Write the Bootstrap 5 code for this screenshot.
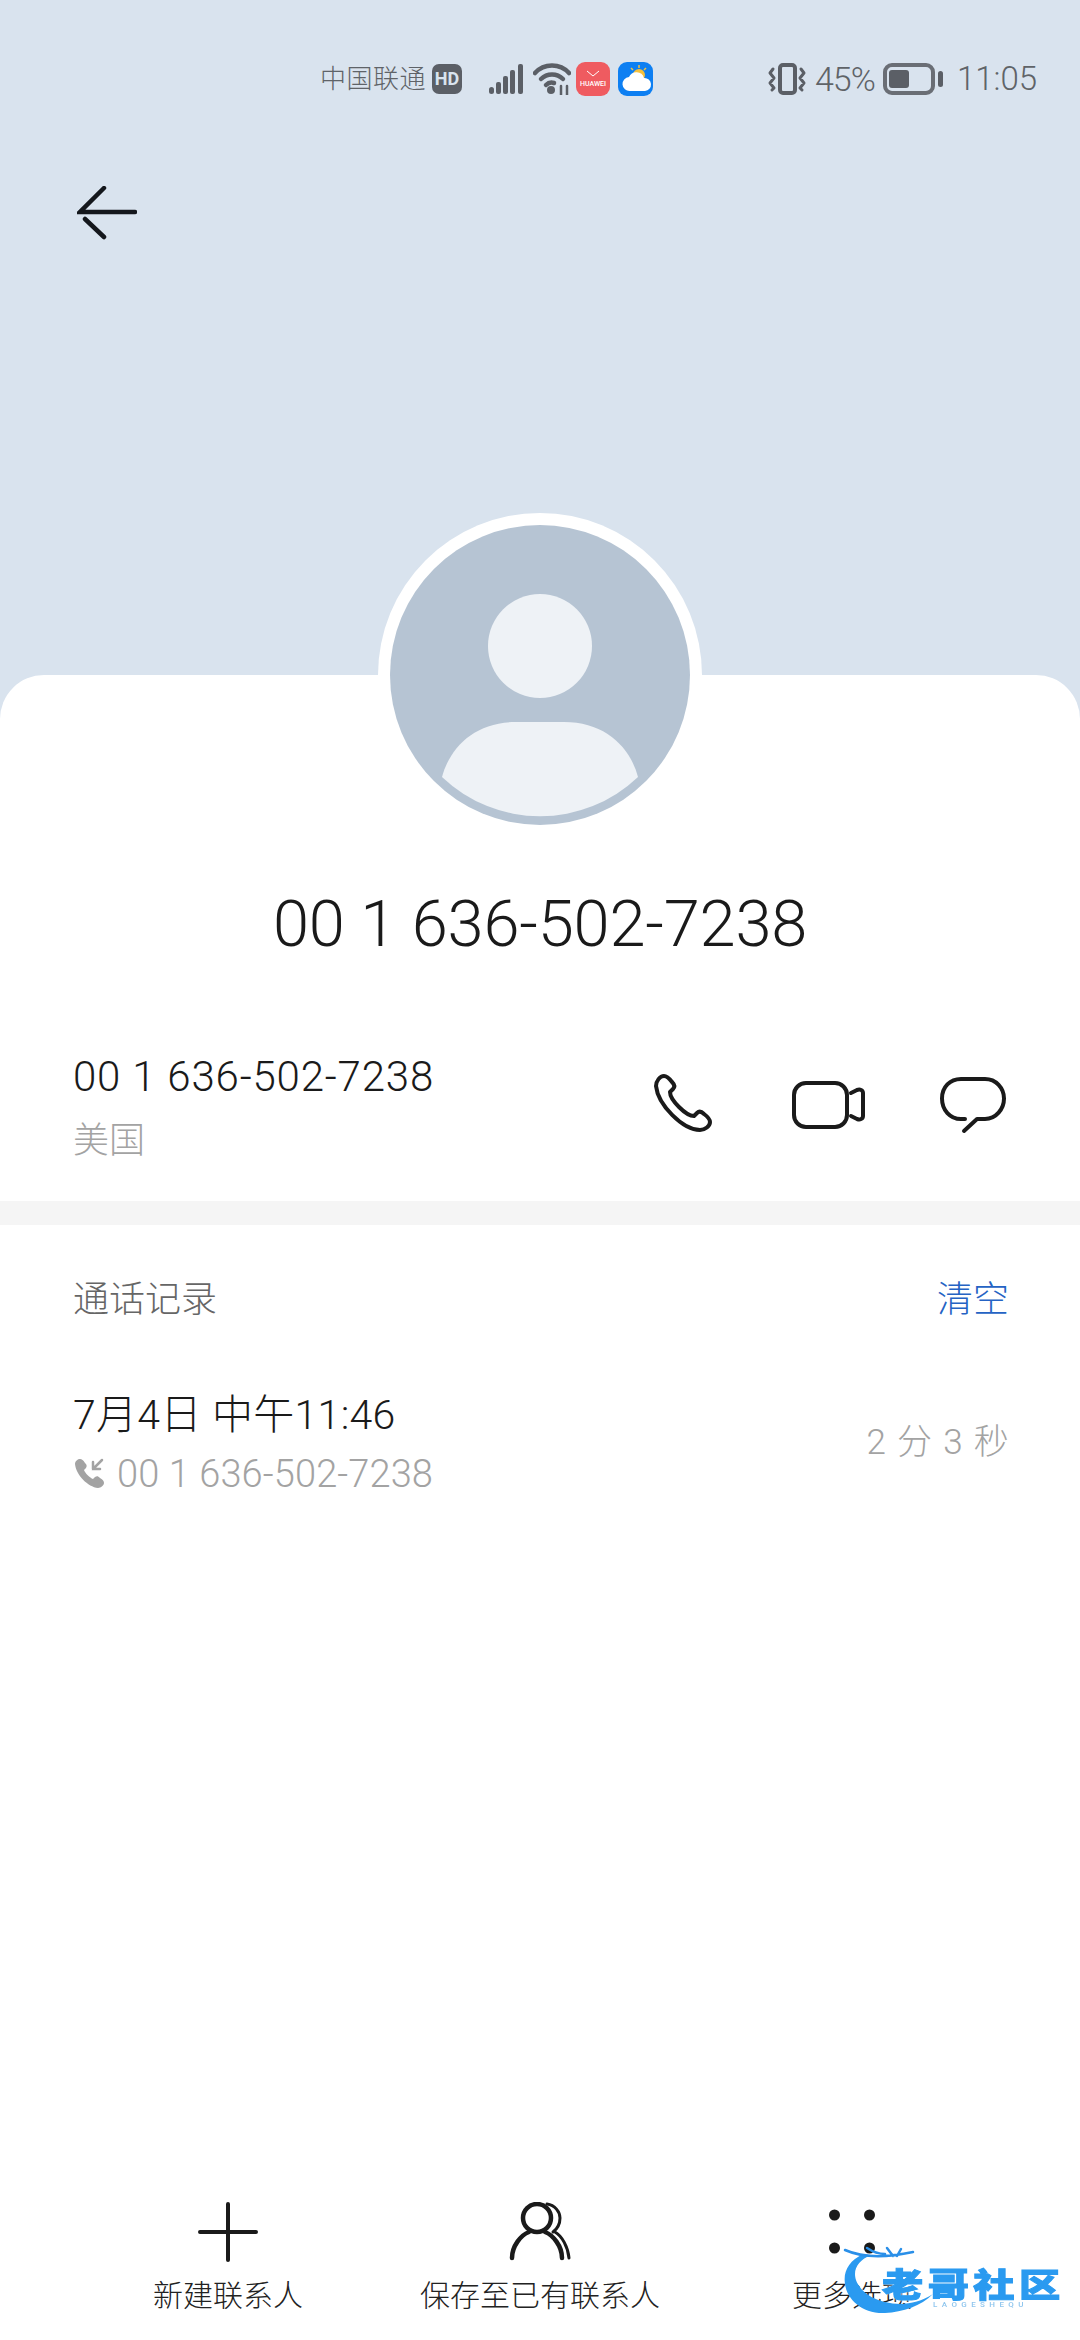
<!DOCTYPE html>
<html lang="zh-CN">
<head>
    <meta charset="UTF-8">
    <meta name="viewport" content="width=device-width, initial-scale=1.0">
    <title>通话详情</title>
    <link href="https://cdn.jsdelivr.net/npm/bootstrap@5.3.0/dist/css/bootstrap.min.css" rel="stylesheet">
    <style>
        body {
            background-color: #fff;
            font-family: Roboto, "Noto Sans CJK SC", sans-serif;
            font-weight: 300;
            color: #1a1a1a;
        }
        svg { display: block; flex-shrink: 0; }
        .page { width: 1080px; height: 2340px; position: relative; overflow: hidden; }

        /* top blue area */
        .hero { height: 719px; background-color: #d9e3ee; flex-shrink: 0; }
        .status-row { height: 111px; padding-top: 47px; color: #5f6368; font-size: 26px; line-height: 34px; }
        .carrier { margin-left: 320px; width: 108px; letter-spacing: .5px; white-space: nowrap; }
        .hd-tag { width: 30px; height: 30px; margin-left: 4px; background: #5b5f66; border-radius: 7px; color: #d9e3ee; font-size: 18px; font-weight: 700; line-height: 30px; text-align: center; }
        .signal-icon { margin-left: 27px; }
        .wifi-icon { margin-left: 10px; }
        .app-huawei { width: 34px; height: 34px; margin-left: 5px; border-radius: 9px; background: #ef5b60; color: #fff; font-size: 7px; font-weight: 500; line-height: 1; }
        .app-weather { width: 35px; height: 34px; margin-left: 8px; border-radius: 9px; background: #0d7ff2; }
        .vibrate-icon { margin-left: 115px; }
        .pct { font-size: 34px; width: 62px; margin-left: 9px; letter-spacing: -1px; white-space: nowrap; }
        .battery-icon { margin-left: 6px; }
        .clock { font-size: 33px; width: 80px; margin-left: 14px; }
        .back-btn { padding: 75px 0 0 77px; }

        /* white sheet */
        .sheet { margin-top: -44px; background: #fff; border-radius: 44px 44px 0 0; }
        .avatar-ring { width: 324px; height: 324px; margin: -162px auto 0; background: #fff; border-radius: 50%; padding: 12px; flex-shrink: 0; }
        .big-number { font-size: 65px; line-height: 72px; margin-top: 51px; text-align: center; letter-spacing: -.2px; }
        .info-row { padding: 0 73px; margin-top: 90px; height: 116px; }
        .num-line { font-size: 42px; line-height: 54px; letter-spacing: .8px; }
        .region-line { font-size: 36px; line-height: 50px; margin-top: 12px; color: #a3a3a3; }
        .action-icons { width: 354px; height: 110px; }
        .video-icon { margin-left: 4px; }
        .gray-band { height: 24px; background: #f5f5f5; margin-top: 35px; }
        .log-head { padding: 0 71px 0 73px; margin-top: 50px; font-size: 36px; line-height: 50px; color: #666; }
        .clear-link { color: #2563c4; text-decoration: none; }
        .log-row { padding: 0 70px 0 73px; margin-top: 63px; }
        .log-time { font-size: 41px; line-height: 54px; letter-spacing: .3px; white-space: pre; }
        .log-num { font-size: 38px; line-height: 50px; margin-top: 7px; color: #a3a3a3; letter-spacing: .1px; }
        .call-icon { margin-right: 12px; }
        .log-dur { font-size: 35px; color: #a3a3a3; letter-spacing: 1.3px; white-space: pre; }

        /* bottom actions */
        .bottom-bar { padding: 0 72px 24px; }
        .bar-item { width: 312px; }
        .bar-label { font-size: 30px; line-height: 40px; margin-top: 14px; white-space: nowrap; color: #222; }

        /* watermark sits over the last bar item */
        .wmark { position: absolute; left: 843px; top: 2246px; width: 225px; height: 70px; filter: blur(.5px); }
        .wmark-art { position: absolute; left: 0; top: 0; }
        .wmark-cn { position: absolute; left: 39px; top: 14px; font-family: "Noto Sans CJK SC", sans-serif; font-size: 33px; font-weight: 900; line-height: 46px; letter-spacing: 3.5px; color: #2a9af0; white-space: nowrap; text-shadow: 0 0 3px #fff; -webkit-text-stroke: 1px #2a9af0; transform: scaleX(1.25); transform-origin: left center; }
        .wmark-en { position: absolute; left: 90px; top: 54px; font-size: 8px; font-weight: 500; line-height: 10px; letter-spacing: 4.4px; color: #8fc6ee; white-space: nowrap; }
    </style>
</head>
<body>
<div class="page d-flex flex-column">

    <!-- Top area -->
    <div class="hero">
        <div class="status-row d-flex align-items-center">
            <span class="carrier">中国联通</span>
            <span class="hd-tag">HD</span>
            <svg class="signal-icon" width="34" height="30" viewBox="0 0 34 30"><g fill="#5b5f66"><rect x="0" y="23" width="5" height="7" rx="2.5"/><rect x="7" y="18" width="5" height="12" rx="2"/><rect x="14" y="12" width="5" height="18" rx="2"/><rect x="21" y="6" width="5" height="24" rx="2"/><rect x="29" y="0" width="5" height="30" rx="2"/></g></svg>
            <svg class="wifi-icon" width="38" height="32" viewBox="0 0 38 32" fill="none" stroke="#5b5f66" stroke-width="4.5" stroke-linecap="round"><path d="M2 10C11 0 27 0 36 10"/><path d="M8 16C14 10 24 10 30 16"/><path d="M13 22C15 20 18 19 21 20"/><circle cx="18" cy="27" r="4" fill="#5b5f66" stroke="none"/><path d="M28 23v9M34 23v9" stroke-width="2.500"/></svg>
            <div class="app-huawei d-flex flex-column align-items-center justify-content-center">
                <svg width="14" height="7" viewBox="0 0 14 7" fill="none" stroke="#fff" stroke-width="1"><path d="M1 1l6 5 6-5"/></svg>
                <span class="mt-1">HUAWEI</span>
            </div>
            <div class="app-weather">
                <svg width="35" height="34" viewBox="0 0 35 34"><circle cx="21" cy="13" r="6" fill="#f5c13d"/><g stroke="#f5c13d" stroke-width="1.500"><path d="M21 3v3M28 6l-2 2M13 6l2 2"/></g><path d="M12 29a7 7 0 0 1-1-14 8 8 0 0 1 15 1 6.500 6.500 0 0 1 1 13z" fill="#fff"/></svg>
            </div>
            <svg class="vibrate-icon" width="38" height="32" viewBox="0 0 38 32" fill="none" stroke="#5b5f66" stroke-linecap="round" stroke-linejoin="round"><rect x="12" y="2" width="15" height="28" rx="3" stroke-width="4"/><path d="M5 6L2 10l4 5-4 5 4 5-2 2M33 6l3 4-4 5 4 5-4 5 2 2" stroke-width="3"/></svg>
            <span class="pct">45%</span>
            <svg class="battery-icon" width="60" height="32" viewBox="0 0 60 32"><rect x="2" y="2" width="48" height="28" rx="7" fill="none" stroke="#6a6e75" stroke-width="4"/><rect x="6" y="7" width="20" height="18" rx="3" fill="#5b5f66"/><rect x="55" y="8" width="5" height="16" rx="2.500" fill="#5b5f66"/></svg>
            <span class="clock">11:05</span>
        </div>
        <div class="back-btn">
            <svg width="60" height="54" viewBox="0 0 60 54" fill="none" stroke="#14171c" stroke-width="4.500" stroke-linecap="round"><path d="M27 2L3 26h55M8 33L27 51"/></svg>
        </div>
    </div>

    <!-- White sheet -->
    <div class="sheet d-flex flex-column flex-grow-1">
        <div class="avatar-ring">
            <svg width="300" height="300" viewBox="0 0 300 300"><circle cx="150" cy="150" r="150" fill="#b6c4d3"/><circle cx="150" cy="121" r="52" fill="#eef2f6"/><path d="M52 252C60 222 85 197 126 197h48c41 0 66 25 74 55A142 142 0 0 1 52 252z" fill="#eef2f6"/></svg>
        </div>

        <div class="big-number">00 1 636-502-7238</div>

        <div class="info-row d-flex justify-content-between">
            <div>
                <div class="num-line">00 1 636-502-7238</div>
                <div class="region-line">美国</div>
            </div>
            <div class="action-icons d-flex justify-content-between align-items-center">
                <svg width="62" height="62" viewBox="0 0 62 62" fill="none" stroke="#1a1a1a" stroke-width="4" stroke-linecap="round" stroke-linejoin="round"><path d="M3 12C3 7 7 2 11 2c3 0 5 2 8 6 3 3 3 5 1 7l-3 3c0 4 4 10 9 15 5 5 11 9 15 9l3-3c2-2 4-2 7 1 4 3 6 5 6 8 0 4-5 8-10 8C30 56 5 31 3 12z"/></svg>
                <svg class="video-icon" width="74" height="48" viewBox="0 0 74 48" fill="none" stroke="#1a1a1a" stroke-width="4" stroke-linecap="round" stroke-linejoin="round"><rect x="2" y="2" width="53" height="44" rx="12"/><path d="M59 12l6-3c3-1 6 0 6 3v23c0 3-3 4-6 3l-6-3"/></svg>
                <svg width="68" height="58" viewBox="0 0 68 58" fill="none" stroke="#1a1a1a" stroke-width="4" stroke-linecap="round" stroke-linejoin="round"><path d="M26 43H22C11 43 3 34 3 22.500S11 3 22 3h24c11 0 19 9 19 19.500S57 43 46 43H38L25 55"/></svg>
            </div>
        </div>

        <div class="gray-band"></div>

        <div class="log-head d-flex justify-content-between">
            <span>通话记录</span>
            <a class="clear-link" href="#">清空</a>
        </div>

        <div class="log-row d-flex justify-content-between align-items-center">
            <div>
                <div class="log-time">7月4日 中午11:46</div>
                <div class="log-num d-flex align-items-center">
                    <svg class="call-icon" width="32" height="32" viewBox="0 0 32 32"><path d="M2 6c0-3 3-5 5-5 2 0 3 1 5 4 2 2 2 3 1 5l-2 2c1 3 6 8 9 9l2-2c2-1 3-1 5 1 3 2 4 3 4 5 0 2-3 5-6 5C15 29 3 17 2 6z" fill="#a3a3a3"/><path d="M29 2L20 11M20 4v7h7" fill="none" stroke="#a3a3a3" stroke-width="2.500" stroke-linecap="round"/></svg>
                    <span>00 1 636-502-7238</span>
                </div>
            </div>
            <span class="log-dur">2 分 3 秒</span>
        </div>

        <!-- Bottom actions -->
        <div class="bottom-bar d-flex mt-auto">
            <div class="bar-item d-flex flex-column align-items-center">
                <svg width="60" height="60" viewBox="0 0 60 60" fill="none" stroke="#1a1a1a" stroke-width="4" stroke-linecap="round"><path d="M30 2v56M2 30h56"/></svg>
                <div class="bar-label">新建联系人</div>
            </div>
            <div class="bar-item d-flex flex-column align-items-center">
                <svg width="62" height="60" viewBox="0 0 62 60" fill="none" stroke="#1a1a1a" stroke-width="4.500" stroke-linecap="round"><circle cx="28" cy="16" r="14"/><path d="M3 56C3 44 12 33 20 30M36 30C44 33 53 44 53 56"/><path d="M38 2C46 3 51 10 51 16C51 22 48 27 44 30M46 30C53 34 59 45 60 56" stroke-width="3"/></svg>
                <div class="bar-label">保存至已有联系人</div>
            </div>
            <div class="bar-item d-flex flex-column align-items-center">
                <svg width="60" height="60" viewBox="0 0 60 60" fill="#1a1a1a"><circle cx="12.500" cy="13" r="5.500"/><circle cx="47.500" cy="13" r="5.500"/><circle cx="12.500" cy="46" r="5.500"/><circle cx="47.500" cy="46" r="5.500"/></svg>
                <div class="bar-label">更多选项</div>
            </div>
        </div>
    </div>

    <!-- Watermark -->
    <div class="wmark">
        <svg class="wmark-art" width="100" height="70" viewBox="0 0 100 70"><path d="M20 8C6 15 0 25 2 38C4 54 20 68 42 67C60 66 78 60 90 48C74 58 58 60 42 56C24 52 12 40 12 28C12 20 18 13 28 9z" fill="#2a9af0"/><path d="M2 4C20 12 42 12 70 6M24 2C30 6 36 8 42 8M44 2L50 10M58 3L54 10" fill="none" stroke="#2a8fe8" stroke-width="2.500" stroke-linecap="round"/></svg>
        <span class="wmark-cn">老哥社区</span>
        <span class="wmark-en">LAOGESHEQU</span>
    </div>
</div>
</body>
</html>
